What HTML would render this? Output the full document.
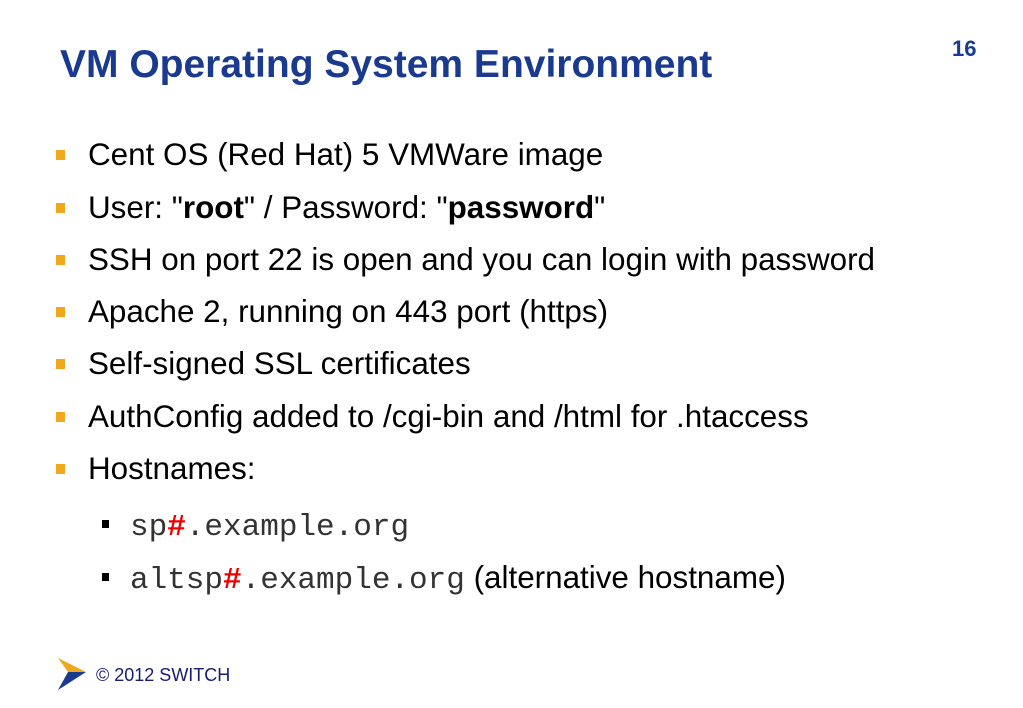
<!DOCTYPE html>
<html><head><style>
body{margin:0;width:1023px;height:708px;background:#fff;position:relative;overflow:hidden;font-family:"Liberation Sans",sans-serif}
.t{position:absolute;left:60px;top:43px;font-size:39px;font-weight:bold;color:#1a3a8f;margin:0}
.n{position:absolute;left:952px;top:36px;font-size:22px;font-weight:bold;color:#1a3a8f}
.b{position:absolute;left:88px;font-size:31.4px;color:#000;line-height:34px;white-space:nowrap}
.b::before{content:"";position:absolute;left:-32px;top:12px;width:9px;height:10px;background:#f0a81c}
.s{position:absolute;left:130px;font-size:31.4px;line-height:34px;white-space:nowrap}
.s::before{content:"";position:absolute;left:-28px;top:12px;width:7px;height:8px;background:#000}
.m{font-family:"Liberation Mono",monospace;font-size:31px;color:#333}
.r{color:#e00;font-weight:bold}
.f{position:absolute;left:96px;top:665px;font-size:18px;color:#1a1a6e}
</style></head><body>
<div class="t">VM Operating System Environment</div>
<div class="n">16</div>
<div class="b" style="top:138px">Cent OS (Red Hat) 5 VMWare image</div>
<div class="b" style="top:191px">User: "<b>root</b>" / Password: "<b>password</b>"</div>
<div class="b" style="top:243px">SSH on port 22 is open and you can login with password</div>
<div class="b" style="top:295px">Apache 2, running on 443 port (https)</div>
<div class="b" style="top:347px">Self-signed SSL certificates</div>
<div class="b" style="top:400px">AuthConfig added to /cgi-bin and /html for .htaccess</div>
<div class="b" style="top:452px">Hostnames:</div>
<div class="s" style="top:508px"><span class="m">sp<span class="r">#</span>.example.org</span></div>
<div class="s" style="top:561px"><span class="m">altsp<span class="r">#</span>.example.org</span> (alternative hostname)</div>
<svg style="position:absolute;left:58px;top:658px" width="30" height="34" viewBox="0 0 30 34">
<polygon points="0,0 28,14 10,14" fill="#f0a81c"/>
<polygon points="10,14 28,14 0,32" fill="#1a3a8f"/>
</svg>
<div class="f">© 2012 SWITCH</div>
</body></html>
